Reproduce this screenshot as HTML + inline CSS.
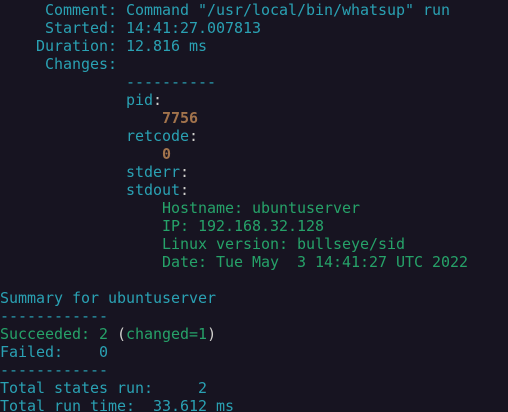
<!DOCTYPE html>
<html><head><style>
html,body{margin:0;background:#171421;width:508px;height:412px;overflow:hidden}
pre{margin:0;padding:1px 0 0 0;font-family:"DejaVu Sans Mono","Liberation Mono",monospace;font-size:15px;line-height:18px;letter-spacing:-0.03px;color:#2aa1b3;white-space:pre}
.g{color:#26a269}.o{color:#a2734c;font-weight:bold}.w{color:#d0cfcc}
</style></head><body><pre>     Comment: Command "/usr/local/bin/whatsup" run
     Started: 14:41:27.007813
    Duration: 12.816 ms
     Changes:
              ----------
              pid<span class="w">:</span>
                  <span class="o">7756</span>
              retcode<span class="w">:</span>
                  <span class="o">0</span>
              stderr<span class="w">:</span>
              stdout<span class="w">:</span>
                  <span class="g">Hostname: ubuntuserver</span>
                  <span class="g">IP: 192.168.32.128</span>
                  <span class="g">Linux version: bullseye/sid</span>
                  <span class="g">Date: Tue May  3 14:41:27 UTC 2022</span>

Summary for ubuntuserver
------------
<span class="g">Succeeded: 2</span> <span class="w">(</span><span class="g">changed=1</span><span class="w">)</span>
Failed:    0
------------
Total states run:     2
Total run time:  33.612 ms</pre></body></html>
